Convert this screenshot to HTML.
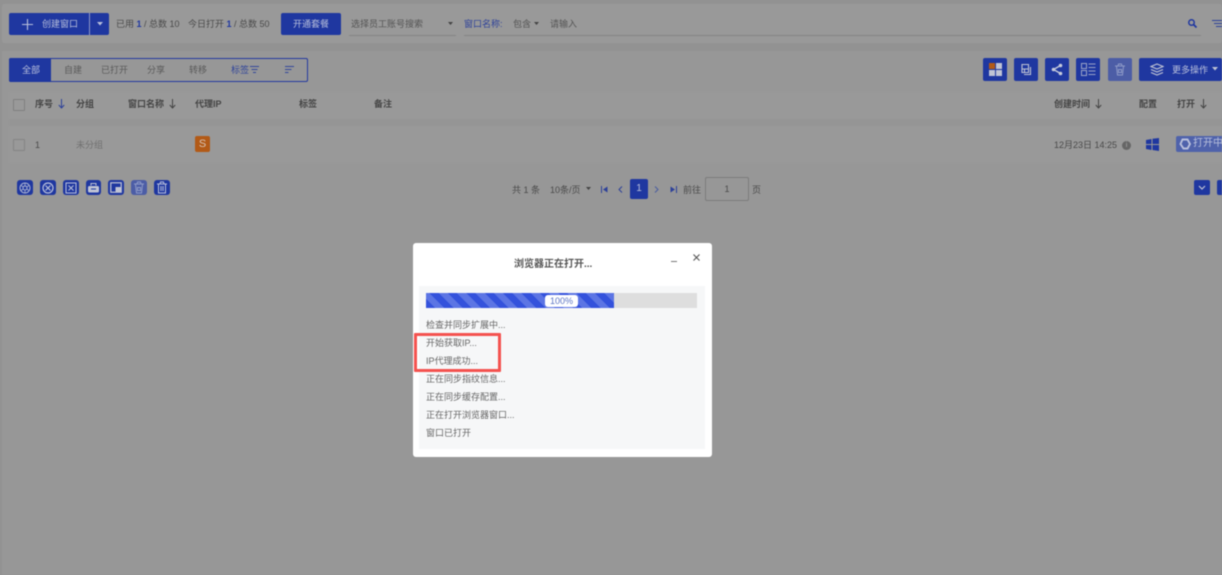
<!DOCTYPE html>
<html lang="zh-CN">
<head>
<meta charset="utf-8">
<style>
html,body{margin:0;padding:0;width:1222px;height:575px;overflow:hidden;background:#929292}
body{position:relative;font-family:"Liberation Sans","Noto Sans CJK SC",sans-serif;font-size:9px;color:#4a4a4a}
.a{position:absolute}
.t{position:absolute;white-space:nowrap;line-height:12px}
#bg{position:absolute;left:0;top:0;width:1222px;height:575px;filter:blur(.6px)}
.btn{position:absolute;background:#1f37a0;border-radius:2px}
.b{color:#1f37a0}
.w{color:#b9c0dc}
.h{font-weight:700;color:#444}
svg{position:absolute;display:block}
</style>
</head>
<body>
<div id="bg">
  <!-- top bar -->
  <div class="a" style="left:2px;top:4px;width:1220px;height:39px;background:#999;border-radius:2px"></div>
  <div class="btn" style="left:9px;top:13px;width:100px;height:22px"></div>
  <div class="a" style="left:89px;top:13px;width:1px;height:22px;background:#8e97c4"></div>
  <svg style="left:21px;top:18px" width="13" height="13" viewBox="0 0 13 13"><path d="M6.500 1v11M1 6.500h11" stroke="#b9c0dc" stroke-width="1.100"/></svg>
  <div class="t w" style="left:42px;top:18px">创建窗口</div>
  <svg style="left:97px;top:22px" width="6" height="4"><path d="M0 0h6L3 3.500z" fill="#b9c0dc"/></svg>
  <div class="t" style="left:116px;top:18px">已用 <b class="b">1</b> / 总数 10</div>
  <div class="t" style="left:188px;top:18px">今日打开 <b class="b">1</b> / 总数 50</div>
  <div class="btn" style="left:281px;top:13px;width:60px;height:22px"></div>
  <div class="t w" style="left:293px;top:18px">开通套餐</div>
  <div class="t" style="left:351px;top:18px;color:#555">选择员工账号搜索</div>
  <svg style="left:448px;top:22px" width="5" height="4"><path d="M0 0h5L2.500 3z" fill="#444"/></svg>
  <div class="a" style="left:349px;top:35px;width:107px;height:1px;background:#858585"></div>
  <div class="t b" style="left:464px;top:18px;color:#2d4199">窗口名称:</div>
  <div class="t" style="left:513px;top:18px;color:#555">包含</div>
  <svg style="left:534px;top:22px" width="5" height="4"><path d="M0 0h5L2.500 3z" fill="#444"/></svg>
  <div class="t" style="left:550px;top:18px;color:#555">请输入</div>
  <div class="a" style="left:464px;top:35px;width:737px;height:1px;background:#858585"></div>
  <svg style="left:1187px;top:18px" width="11" height="11" viewBox="0 0 11 11"><circle cx="4.500" cy="4.500" r="2.700" fill="none" stroke="#1f37a0" stroke-width="1.500"/><path d="M6.500 6.500l3 3" stroke="#1f37a0" stroke-width="1.800"/></svg>
  <svg style="left:1212px;top:20px" width="10" height="8" viewBox="0 0 10 8"><path d="M0 .5h10M2 3.500h8M4 6.500h6" stroke="#2d4199" stroke-width="1"/></svg>

  <!-- list panel -->
  <div class="a" style="left:2px;top:51px;width:1220px;height:524px;background:#979797"></div>
  <div class="a" style="left:9px;top:58px;width:297px;height:22px;border:1px solid #24399f;border-radius:2px"></div>
  <div class="a" style="left:9px;top:58px;width:42px;height:24px;background:#1f37a0;border-radius:2px 0 0 2px"></div>
  <div class="t w" style="left:22px;top:64px">全部</div>
  <div class="t" style="left:64px;top:64px;color:#5a5a5a">自建</div>
  <div class="t" style="left:101px;top:64px;color:#5a5a5a">已打开</div>
  <div class="t" style="left:147px;top:64px;color:#5a5a5a">分享</div>
  <div class="t" style="left:189px;top:64px;color:#5a5a5a">转移</div>
  <div class="t" style="left:231px;top:64px;color:#33479a">标签</div>
  <svg style="left:250px;top:66px" width="9" height="8" viewBox="0 0 9 8"><path d="M0 .5h9M1.500 3.500h6M3 6.500h3" stroke="#33479a" stroke-width="1"/></svg>
  <svg style="left:285px;top:66px" width="10" height="8" viewBox="0 0 10 8"><path d="M0 .5h9M0 3.500h6.500M0 6.500h3.500" stroke="#33479a" stroke-width="1"/></svg>

  <!-- right toolbar -->
  <div class="btn" style="left:983px;top:58px;width:24px;height:23px"></div>
  <div class="a" style="left:989px;top:63px;width:6px;height:6px;background:#b25a17"></div>
  <div class="a" style="left:996px;top:63px;width:6px;height:6px;background:#c0c4d4"></div>
  <div class="a" style="left:989px;top:70px;width:6px;height:6px;background:#c0c4d4"></div>
  <div class="a" style="left:996px;top:70px;width:6px;height:6px;background:#c0c4d4"></div>
  <div class="btn" style="left:1014px;top:58px;width:24px;height:23px"></div>
  <svg style="left:1020px;top:63px" width="13" height="13" viewBox="0 0 13 13"><path d="M2 1.500h6.500v8H2zM2 6h6.500M4.500 6v3.500M10.500 4v7.500H4" fill="none" stroke="#c0c4d4" stroke-width="1.100"/></svg>
  <div class="btn" style="left:1045px;top:58px;width:24px;height:23px"></div>
  <svg style="left:1051px;top:63px" width="12" height="13" viewBox="0 0 12 13"><path d="M9.500 2.500L2.500 6.500l7 4" fill="none" stroke="#c8ccdc" stroke-width="1.300"/><circle cx="9.500" cy="2.500" r="1.800" fill="#c8ccdc"/><circle cx="2.500" cy="6.500" r="1.800" fill="#c8ccdc"/><circle cx="9.500" cy="10.500" r="1.800" fill="#c8ccdc"/></svg>
  <div class="btn" style="left:1076px;top:58px;width:24px;height:23px"></div>
  <svg style="left:1081px;top:63px" width="15" height="13" viewBox="0 0 15 13"><path d="M.5.500h5v5h-5zM.5 7.500h5v5h-5zM7.500 1h7M7.500 4.500h7M7.500 8h7M7.500 11.500h7" fill="none" stroke="#9aa3c8" stroke-width="1"/></svg>
  <div class="btn" style="left:1108px;top:58px;width:24px;height:23px;background:#4c5da6"></div>
  <svg style="left:1114px;top:63px" width="12" height="13" viewBox="0 0 12 13"><path d="M1 3h10M4 3l.5-2h3l.5 2M2.500 3l1 9h5l1-9M4.500 6.500h3v3h-3z" fill="none" stroke="#8f9bc8" stroke-width="1"/></svg>
  <div class="btn" style="left:1139px;top:58px;width:83px;height:23px"></div>
  <svg style="left:1150px;top:63px" width="14" height="13" viewBox="0 0 14 13"><path d="M7 1l6 2.500L7 6 1 3.500zM1 6.500L7 9l6-2.500M1 9.500L7 12l6-2.500" fill="none" stroke="#c0c4d4" stroke-width="1.200"/></svg>
  <div class="t w" style="left:1172px;top:64px">更多操作</div>
  <svg style="left:1212px;top:67px" width="6" height="4"><path d="M0 0h6L3 3.500z" fill="#c0c4d4"/></svg>

  <!-- table header -->
  <div class="a" style="left:9px;top:92px;width:1213px;height:27px;background:#999"></div>
  <div class="a" style="left:9px;top:119px;width:1213px;height:7px;background:#959595"></div>
  <div class="a" style="left:13px;top:99px;width:10px;height:10px;border:1px solid #808080;border-radius:1px"></div>
  <div class="t h" style="left:35px;top:98px">序号</div>
  <svg style="left:58px;top:99px" width="7" height="10" viewBox="0 0 7 10"><path d="M3.500 0v9M.8 6l2.700 3 2.700-3" fill="none" stroke="#2d4199" stroke-width="1"/></svg>
  <div class="t h" style="left:76px;top:98px">分组</div>
  <div class="t h" style="left:128px;top:98px">窗口名称</div>
  <svg style="left:169px;top:99px" width="7" height="10" viewBox="0 0 7 10"><path d="M3.500 0v9M.8 6l2.700 3 2.700-3" fill="none" stroke="#444" stroke-width="1"/></svg>
  <div class="t h" style="left:195px;top:98px">代理IP</div>
  <div class="t h" style="left:299px;top:98px">标签</div>
  <div class="t h" style="left:374px;top:98px">备注</div>
  <div class="t h" style="left:1054px;top:98px">创建时间</div>
  <svg style="left:1095px;top:99px" width="7" height="10" viewBox="0 0 7 10"><path d="M3.500 0v9M.8 6l2.700 3 2.700-3" fill="none" stroke="#444" stroke-width="1"/></svg>
  <div class="t h" style="left:1139px;top:98px">配置</div>
  <div class="t h" style="left:1177px;top:98px">打开</div>
  <svg style="left:1200px;top:99px" width="7" height="10" viewBox="0 0 7 10"><path d="M3.500 0v9M.8 6l2.700 3 2.700-3" fill="none" stroke="#444" stroke-width="1"/></svg>

  <!-- row -->
  <div class="a" style="left:9px;top:126px;width:1213px;height:37px;background:#999"></div>
  <div class="a" style="left:13px;top:139px;width:10px;height:10px;border:1px solid #858585;border-radius:1px"></div>
  <div class="t" style="left:35px;top:139px">1</div>
  <div class="t" style="left:76px;top:139px;color:#707070">未分组</div>
  <div class="a" style="left:195px;top:136px;width:15px;height:16px;background:#b25a17;border-radius:2px;color:#d8c4b4;font-size:11px;line-height:16px;text-align:center">S</div>
  <div class="t" style="left:1054px;top:139px">12月23日 14:25</div>
  <div class="a" style="left:1122px;top:141px;width:9px;height:9px;background:#666;border-radius:50%;color:#aaa;font-size:7px;line-height:9px;text-align:center">i</div>
  <svg style="left:1146px;top:138px" width="13" height="13" viewBox="0 0 13 13"><path d="M0 2l5.500-1v5H0zM6.500 .8L13 0v6H6.500zM0 7h5.500v5L0 11zM6.500 7H13v6l-6.500-1z" fill="#1f37a0"/></svg>
  <div class="a" style="left:1176px;top:136px;width:46px;height:16px;background:#4f62ab;border-radius:2px 0 0 2px"></div>
  <svg style="left:1179px;top:138px" width="12" height="12" viewBox="0 0 12 12"><path d="M3.500 1.500h5l2.500 4.500-2.500 4.500H4.500L1.500 6z" fill="none" stroke="#b9c0dc" stroke-width="1.900"/></svg>
  <div class="t w" style="left:1193px;top:138px;font-size:10px">打开中</div>

  <!-- bulk icons -->
  <div class="btn" style="left:17px;top:180px;width:16px;height:15px;border-radius:3px"></div>
  <svg style="left:19px;top:182px" width="12" height="12" viewBox="0 0 12 12"><circle cx="6" cy="6" r="5" fill="none" stroke="#aab2d2"/><circle cx="6" cy="6" r="2" fill="none" stroke="#aab2d2"/><path d="M6 1v3M2 3.500l2.500 1.500M2 8.500L4.500 7M6 11V8M10 8.500L7.500 7M10 3.500L7.500 5" stroke="#aab2d2" stroke-width=".8"/></svg>
  <div class="btn" style="left:40px;top:180px;width:16px;height:15px;border-radius:3px"></div>
  <svg style="left:42px;top:182px" width="12" height="12" viewBox="0 0 12 12"><circle cx="6" cy="6" r="5" fill="none" stroke="#b9c0dc" stroke-width="1.200"/><path d="M3.500 3.500l5 5M8.500 3.500l-5 5" stroke="#b9c0dc" stroke-width="1.200"/></svg>
  <div class="btn" style="left:63px;top:180px;width:16px;height:15px;border-radius:3px"></div>
  <svg style="left:65px;top:182px" width="12" height="12" viewBox="0 0 12 12"><rect x="1" y="1" width="10" height="10" fill="none" stroke="#b9c0dc"/><path d="M3.500 3.500l5 5M8.500 3.500l-5 5" stroke="#b9c0dc"/></svg>
  <div class="btn" style="left:86px;top:180px;width:15px;height:15px;border-radius:3px"></div>
  <svg style="left:87px;top:182px" width="13" height="12" viewBox="0 0 13 12"><path d="M4 3.500V1.500h5v2" fill="none" stroke="#c0c4d4"/><rect x="1" y="4" width="11" height="6.500" rx="1.500" fill="#c0c4d4"/><path d="M4 7h5" stroke="#1f37a0"/></svg>
  <div class="btn" style="left:108px;top:180px;width:16px;height:15px;border-radius:3px"></div>
  <svg style="left:110px;top:182px" width="12" height="11" viewBox="0 0 12 11"><rect x=".8" y=".8" width="10.400" height="9.400" fill="none" stroke="#c0c4d4" stroke-width="1.200"/><rect x="5.500" y="5" width="5.500" height="5" fill="#c0c4d4"/></svg>
  <div class="btn" style="left:131px;top:180px;width:16px;height:15px;border-radius:3px;background:#4c5da6"></div>
  <svg style="left:133px;top:181px" width="12" height="13" viewBox="0 0 12 13"><path d="M1 3h10M4 3l.5-2h3l.5 2M2.500 3l1 9h5l1-9M4.500 6.500h3v3h-3z" fill="none" stroke="#8f9bc8" stroke-width="1"/></svg>
  <div class="btn" style="left:154px;top:180px;width:16px;height:15px;border-radius:3px"></div>
  <svg style="left:156px;top:181px" width="12" height="13" viewBox="0 0 12 13"><path d="M1 3h10M4 3l.5-2h3l.5 2M2.500 3v9h7V3M5 5v5M7 5v5" fill="none" stroke="#b9c0dc" stroke-width="1"/></svg>

  <!-- pagination -->
  <div class="t" style="left:512px;top:184px">共 1 条</div>
  <div class="t" style="left:550px;top:184px">10条/页</div>
  <svg style="left:586px;top:187px" width="5" height="4"><path d="M0 0h5L2.500 3z" fill="#444"/></svg>
  <svg style="left:601px;top:186px" width="7" height="7" viewBox="0 0 7 7"><path d="M.5 0v7" stroke="#2d4199"/><path d="M6.500 .5v6L2 3.500z" fill="#2d4199"/></svg>
  <svg style="left:618px;top:186px" width="5" height="7" viewBox="0 0 5 7"><path d="M4 .5L1 3.500l3 3" fill="none" stroke="#2d4199"/></svg>
  <div class="btn" style="left:630px;top:179px;width:18px;height:20px;border-radius:2px;color:#b9c0dc;text-align:center;line-height:20px;font-size:10px">1</div>
  <svg style="left:654px;top:186px" width="5" height="7" viewBox="0 0 5 7"><path d="M1 .5l3 3-3 3" fill="none" stroke="#4a5da0"/></svg>
  <svg style="left:670px;top:186px" width="7" height="7" viewBox="0 0 7 7"><path d="M6.500 0v7" stroke="#2d4199"/><path d="M.5 .5v6L5 3.500z" fill="#2d4199"/></svg>
  <div class="t" style="left:683px;top:184px">前往</div>
  <div class="a" style="left:705px;top:177px;width:42px;height:22px;border:1px solid #7c7c7c;border-radius:2px;text-align:center;line-height:22px;font-size:9px">1</div>
  <div class="t" style="left:752px;top:184px">页</div>
  <div class="btn" style="left:1194px;top:180px;width:16px;height:15px;border-radius:2px"></div>
  <svg style="left:1198px;top:185px" width="8" height="5" viewBox="0 0 8 5"><path d="M1 1l3 3 3-3" fill="none" stroke="#c0c4d4" stroke-width="1.200"/></svg>
  <div class="btn" style="left:1217px;top:180px;width:5px;height:15px;border-radius:2px 0 0 2px"></div>

  <!-- dialog -->
  <div class="a" style="left:413px;top:243px;width:299px;height:214px;background:#fff;border-radius:3px"></div>
  <div class="a" style="left:419px;top:286px;width:286px;height:163px;background:#f6f7f8"></div>
  <div class="t" style="left:514px;top:257px;font-size:10px;font-weight:700;color:#555;transform:translateY(2px)">浏览器正在打开...</div>
  <div class="a" style="left:671px;top:261px;width:6px;height:1px;background:#777"></div>
  <svg style="left:693px;top:254px" width="7" height="7" viewBox="0 0 7 7"><path d="M.5 .5l6 6M6.500 .5l-6 6" stroke="#555" stroke-width="1.100"/></svg>
  <div class="a" style="left:426px;top:293px;width:271px;height:15px;background:#dedede"></div>
  <div class="a" style="left:426px;top:293px;width:188px;height:15px;background:repeating-linear-gradient(45deg,#3452dc 0 6.500px,#5c75e4 6.500px 13px)"></div>
  <div class="a" style="left:545px;top:295px;width:33px;height:12px;background:#fff;border-radius:3px;color:#5c75c4;font-size:9px;line-height:12px;text-align:center">100%</div>
  <div class="t" style="left:426px;top:319px;color:#666">检查并同步扩展中...</div>
  <div class="t" style="left:426px;top:337px;color:#666">开始获取IP...</div>
  <div class="t" style="left:426px;top:355px;color:#666">IP代理成功...</div>
  <div class="t" style="left:426px;top:373px;color:#666">正在同步指纹信息...</div>
  <div class="t" style="left:426px;top:391px;color:#666">正在同步缓存配置...</div>
  <div class="t" style="left:426px;top:409px;color:#666">正在打开浏览器窗口...</div>
  <div class="t" style="left:426px;top:427px;color:#666">窗口已打开</div>
  <div class="a" style="left:414px;top:333px;width:81px;height:33px;border:3px solid #f4524f;border-radius:1px"></div>
</div>
</body>
</html>
